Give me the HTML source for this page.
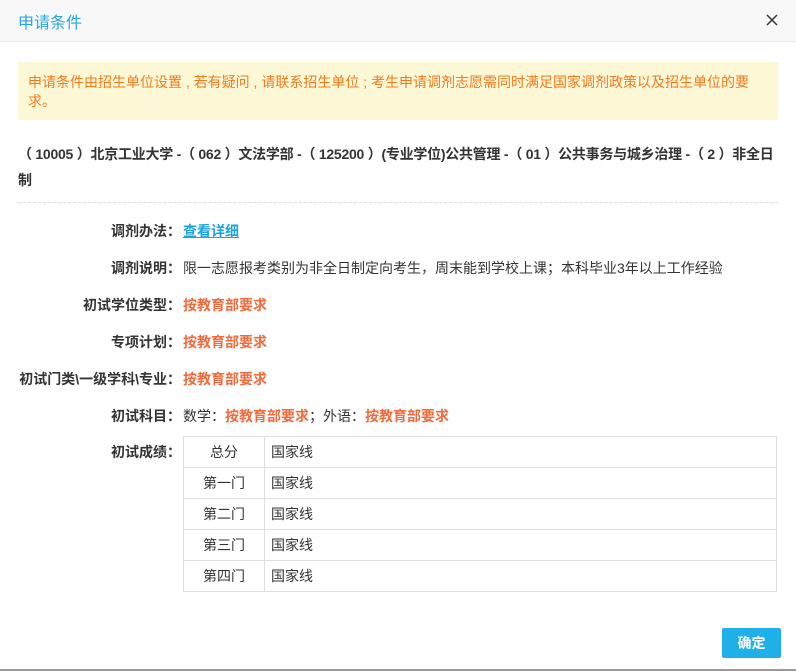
<!DOCTYPE html>
<html><head><meta charset="utf-8"><style>
*{margin:0;padding:0;box-sizing:border-box}
body{width:796px;height:671px;background:#fff;font-family:"Liberation Sans","Noto Sans CJK SC",sans-serif;font-size:14px;color:#333;position:relative;overflow:hidden}
.hd{position:absolute;left:0;top:0;width:796px;height:42px;background:#f8f8f8;border-bottom:1px solid #e8e8e8}
.hd .t{position:absolute;left:18px;top:9px;font-size:16px;color:#2aa6df}
.hd .x{position:absolute;left:765px;top:13px}
.tip{position:absolute;left:18px;top:62px;width:760px;height:58px;background:#fcf8d6;color:#f07a1e;padding:11px 10px 0;line-height:19px;font-size:14px}
.h{position:absolute;left:18px;top:141px;width:778px;font-weight:bold;line-height:26px;font-size:14px;color:#333;white-space:nowrap;letter-spacing:-0.25px}
.dash{position:absolute;left:18px;top:202px;width:760px;border-top:1px dashed #ddd}
.row{position:absolute;left:0;height:20px;line-height:20px;width:796px}
.row .l{position:absolute;right:615px;font-weight:bold;white-space:nowrap}
.row .v{position:absolute;left:183px;white-space:nowrap}
.o{color:#f36a3c;font-weight:bold}
a{color:#1aa3dc;font-weight:bold;text-decoration:underline}
table{position:absolute;left:183px;top:436px;width:594px;border-collapse:collapse}
td{border:1px solid #ddd;height:31px;padding:0 6px}
td:first-child{width:81px;text-align:center}
.btn{position:absolute;left:722px;top:628px;width:59px;height:30px;background:#1fb0e8;color:#fff;text-align:center;line-height:30px;font-weight:bold;border-radius:2px}
.bl{position:absolute;left:0;top:669px;width:796px;height:2px;background:#999}
</style></head><body>
<div class="hd"><div class="t">申请条件</div>
<svg class="x" width="14" height="14" viewBox="0 0 14 14"><path d="M2 2L12 12M12 2L2 12" stroke="#333" stroke-width="1.5"/></svg></div>
<div class="tip">申请条件由招生单位设置 , 若有疑问 , 请联系招生单位 ; 考生申请调剂志愿需同时满足国家调剂政策以及招生单位的要求。</div>
<div class="h">（ 10005 ）北京工业大学 -（ 062 ）文法学部 -（ 125200 ）(专业学位)公共管理 -（ 01 ）公共事务与城乡治理 -（ 2 ）非全日<br>制</div>
<div class="dash"></div>
<div class="row" style="top:221px"><span class="l">调剂办法：</span><span class="v"><a>查看详细</a></span></div>
<div class="row" style="top:258px"><span class="l">调剂说明：</span><span class="v">限一志愿报考类别为非全日制定向考生，周末能到学校上课；本科毕业3年以上工作经验</span></div>
<div class="row" style="top:295px"><span class="l">初试学位类型：</span><span class="v o">按教育部要求</span></div>
<div class="row" style="top:332px"><span class="l">专项计划：</span><span class="v o">按教育部要求</span></div>
<div class="row" style="top:369px"><span class="l">初试门类\一级学科\专业：</span><span class="v o">按教育部要求</span></div>
<div class="row" style="top:406px"><span class="l">初试科目：</span><span class="v">数学：<span class="o">按教育部要求</span>；外语：<span class="o">按教育部要求</span></span></div>
<div class="row" style="top:442px"><span class="l">初试成绩：</span></div>
<table>
<tr><td>总分</td><td>国家线</td></tr>
<tr><td>第一门</td><td>国家线</td></tr>
<tr><td>第二门</td><td>国家线</td></tr>
<tr><td>第三门</td><td>国家线</td></tr>
<tr><td>第四门</td><td>国家线</td></tr>
</table>
<div class="btn">确定</div>
<div class="bl"></div>
</body></html>
